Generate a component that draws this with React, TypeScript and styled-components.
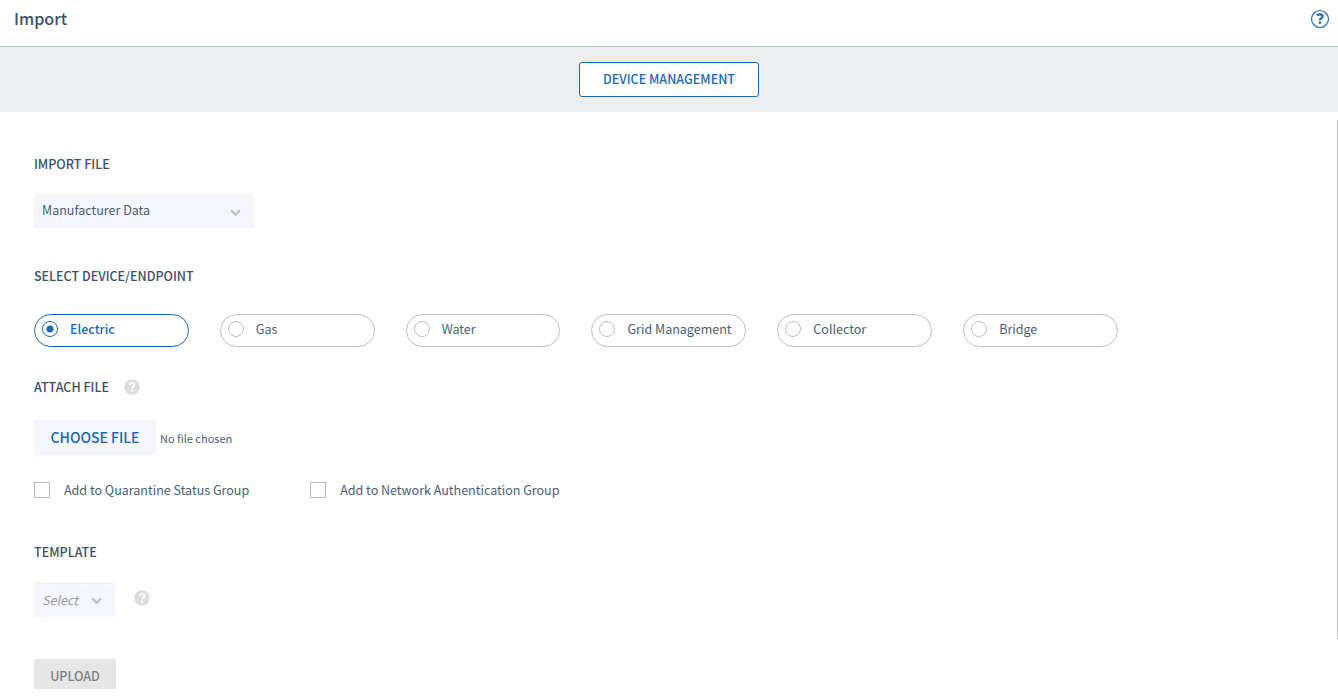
import React, { useState } from "react";
import styled, { createGlobalStyle } from "styled-components";

const ink = "#3b5066";
const softInk = "#4a5e73";
const blue = "#1a67b0";
const line = "#b8c1c7";
const field = "#f5f6fb";

const GlobalStyle = createGlobalStyle`
  *, *::before, *::after { box-sizing: border-box; }
  body {
    margin: 0;
    background: #fff;
    color: ${softInk};
    font: 400 14px/20px "Source Sans Pro", "Noto Sans CJK SC", "Open Sans", sans-serif;
    /* keeps fallback faces at the x-height of Source Sans */
    font-size-adjust: 0.486;
  }
  button, input, select {
    margin: 0;
    font: inherit;
    font-size-adjust: inherit;
    color: inherit;
  }
`;

const Page = styled.div`
  display: flex;
  flex-direction: column;
  height: 100vh;
  padding-bottom: 11px;
`;

const Header = styled.header`
  flex: none;
  display: flex;
  align-items: flex-start;
  justify-content: space-between;
  height: 47px;
  padding: 9px 8px 0 14px;
  border-bottom: 1px solid ${line};
`;

const Title = styled.h1`
  margin: 0;
  color: ${ink};
  font-size: 18px;
  font-weight: 500;
  line-height: 18px;
`;

const HelpButton = styled.button`
  display: flex;
  padding: 0;
  border: 0;
  background: none;
  cursor: pointer;
`;

const Toolbar = styled.nav`
  flex: none;
  display: flex;
  justify-content: center;
  padding: 15px 0;
  background: #ebeff0;
`;

const ToolbarButton = styled.button`
  width: 180px;
  height: 35px;
  padding: 0 0 2px;
  border: 1px solid ${blue};
  border-radius: 3px;
  background: #fff;
  color: ${blue};
  font-weight: 500;
`;

const Content = styled.main`
  position: relative;
  flex: 1;
  min-height: 0;
  overflow: hidden;
`;

const ScrollThumb = styled.div`
  position: absolute;
  top: 8px;
  right: 0;
  width: 1px;
  height: 90%;
  background: #c1c1c1;
`;

const Form = styled.form`
  display: flex;
  flex-direction: column;
  padding: 42px 34px 0;
`;

const Section = styled.section<{ $gap: number; $after: number }>`
  display: flex;
  flex-direction: column;
  align-items: flex-start;
  gap: ${(p) => p.$gap}px;
  margin-bottom: ${(p) => p.$after}px;
`;

const HeadingRow = styled.div`
  display: flex;
  align-items: center;
  gap: 15px;
`;

const Heading = styled.h2`
  margin: 0;
  color: ${ink};
  font-size: 14px;
  font-weight: 500;
  line-height: 20px;
`;

const SelectWrap = styled.div<{ $width: number }>`
  position: relative;
  width: ${(p) => p.$width}px;
`;

const Select = styled.select<{ $placeholder?: boolean }>`
  appearance: none;
  display: block;
  width: 100%;
  height: ${(p) => (p.$placeholder ? 35 : 34)}px;
  padding: 0 24px ${(p) => (p.$placeholder ? 0 : 2)}px 8px;
  border: 0;
  border-radius: 0;
  background: ${field};
  font-style: ${(p) => (p.$placeholder ? "italic" : "normal")};
  color: ${(p) => (p.$placeholder ? "#999" : softInk)};
`;

const Chevron = styled.svg`
  position: absolute;
  top: 15px;
  right: 13px;
  pointer-events: none;
`;

const Pills = styled.div`
  display: grid;
  grid-template-columns: repeat(6, 1fr);
  gap: 31px;
  width: 100%;
  max-width: 1084px;
`;

const Pill = styled.label<{ $on: boolean }>`
  display: flex;
  align-items: center;
  gap: 12px;
  height: 33px;
  padding: 0 8px 3px 7px;
  border: 1px solid ${(p) => (p.$on ? blue : line)};
  border-radius: 17px;
  color: ${(p) => (p.$on ? blue : softInk)};
  font-weight: ${(p) => (p.$on ? 500 : 400)};
  white-space: nowrap;
`;

const Radio = styled.input`
  appearance: none;
  flex: none;
  width: 16px;
  height: 16px;
  border: 1px solid ${line};
  border-radius: 50%;
  &:checked {
    border-color: ${blue};
    background: radial-gradient(circle, ${blue} 3px, transparent 4px);
  }
`;

const FileLabel = styled.label`
  display: flex;
  align-items: center;
  gap: 4px;
  font-size: 11px;
  font-size-adjust: none;
`;

const FileInput = styled.input`
  position: absolute;
  width: 1px;
  height: 1px;
  opacity: 0;
`;

const FileButton = styled.span`
  width: 122px;
  height: 35px;
  border-radius: 3px;
  background: ${field};
  color: ${blue};
  font-size: 14px;
  font-weight: 500;
  line-height: 35px;
  text-align: center;
`;

const Checks = styled.div`
  display: flex;
  gap: 61px;
  margin-bottom: 42px;
`;

const CheckLabel = styled.label`
  display: flex;
  align-items: center;
  gap: 14px;
`;

const Checkbox = styled.input`
  appearance: none;
  width: 16px;
  height: 16px;
  border: 1px solid #b9bcbf;
  background: #fff;
  &:checked { background: ${blue}; }
`;

const TemplateRow = styled.div`
  display: flex;
  align-items: flex-start;
  gap: 19px;
`;

const Hint = styled.svg<{ $top?: number }>`
  flex: none;
  margin-top: ${(p) => p.$top ?? 0}px;
`;

const UploadButton = styled.button`
  width: 82px;
  height: 35px;
  padding: 0 0 1px;
  border: 0;
  border-radius: 3px;
  background: #e6e6e6;
  color: #808080;
  font-weight: 500;
`;

const HintIcon = ({ top }: { top?: number }) => (
  <Hint $top={top} width="16" height="16" viewBox="0 0 16 16" aria-label="Help" role="img">
    <circle cx="8" cy="8" r="7.8" fill="#dcdfe1" />
    <path d="M5.7 6.2C5.7 4.7 6.7 3.9 8 3.9s2.3.8 2.3 2c0 1.7-2.1 1.8-2.1 3.6" fill="none" stroke="#fff" strokeWidth="1.7" />
    <circle cx="8.1" cy="11.7" r="1.1" fill="#fff" />
  </Hint>
);

const Arrow = () => (
  <Chevron width="11" height="8" viewBox="0 0 11 8" aria-hidden="true">
    <path d="M1.2 1.4 5.5 5.7 9.8 1.4" fill="none" stroke="#bcc1c5" strokeWidth="2.2" />
  </Chevron>
);

const devices = ["Electric", "Gas", "Water", "Grid Management", "Collector", "Bridge"];

export default function App() {
  const [device, setDevice] = useState("Electric");
  const [fileName, setFileName] = useState("No file chosen");

  return (
    <Page>
      <GlobalStyle />
      <Header>
        <Title>Import</Title>
        <HelpButton type="button" aria-label="Help">
          <svg width="20" height="20" viewBox="0 0 20 20" aria-hidden="true">
            <circle cx="10" cy="10" r="8.5" fill="none" stroke={blue} strokeWidth="1.2" />
            <path d="M7 6.4C7.8 5.7 8.8 5.4 9.8 5.4c1.7 0 2.8.7 2.8 1.8 0 1.8-2.7 1.9-2.7 4" fill="none" stroke={blue} strokeWidth="2.2" />
            <path d="M8.7 12.5h2.4v2.2H8.7z" fill={blue} />
          </svg>
        </HelpButton>
      </Header>
      <Toolbar>
        <ToolbarButton type="button">DEVICE MANAGEMENT</ToolbarButton>
      </Toolbar>
      <Content>
        <Form onSubmit={(e) => e.preventDefault()}>
          <Section $gap={20} $after={38}>
            <Heading id="import-file">IMPORT FILE</Heading>
            <SelectWrap $width={220}>
              <Select aria-labelledby="import-file">
                <option>Manufacturer Data</option>
              </Select>
              <Arrow />
            </SelectWrap>
          </Section>

          <Section $gap={28} $after={30}>
            <Heading id="device">SELECT DEVICE/ENDPOINT</Heading>
            <Pills role="radiogroup" aria-labelledby="device">
              {devices.map((name) => (
                <Pill key={name} $on={name === device}>
                  <Radio
                    type="radio"
                    name="device"
                    checked={name === device}
                    onChange={() => setDevice(name)}
                  />
                  {name}
                </Pill>
              ))}
            </Pills>
          </Section>

          <Section $gap={23} $after={25}>
            <HeadingRow>
              <Heading>ATTACH FILE</Heading>
              <HintIcon />
            </HeadingRow>
            <FileLabel>
              <FileInput
                type="file"
                onChange={(e) => setFileName(e.target.files?.[0]?.name ?? "No file chosen")}
              />
              <FileButton>CHOOSE FILE</FileButton>
              {fileName}
            </FileLabel>
          </Section>

          <Checks>
            <CheckLabel>
              <Checkbox type="checkbox" />
              Add to Quarantine Status Group
            </CheckLabel>
            <CheckLabel>
              <Checkbox type="checkbox" />
              Add to Network Authentication Group
            </CheckLabel>
          </Checks>

          <Section $gap={20} $after={42}>
            <Heading id="template">TEMPLATE</Heading>
            <TemplateRow>
              <SelectWrap $width={81}>
                <Select aria-labelledby="template" $placeholder>
                  <option>Select</option>
                </Select>
                <Arrow />
              </SelectWrap>
              <HintIcon top={8} />
            </TemplateRow>
          </Section>

          <UploadButton type="submit" disabled>UPLOAD</UploadButton>
        </Form>
        <ScrollThumb />
      </Content>
    </Page>
  );
}
